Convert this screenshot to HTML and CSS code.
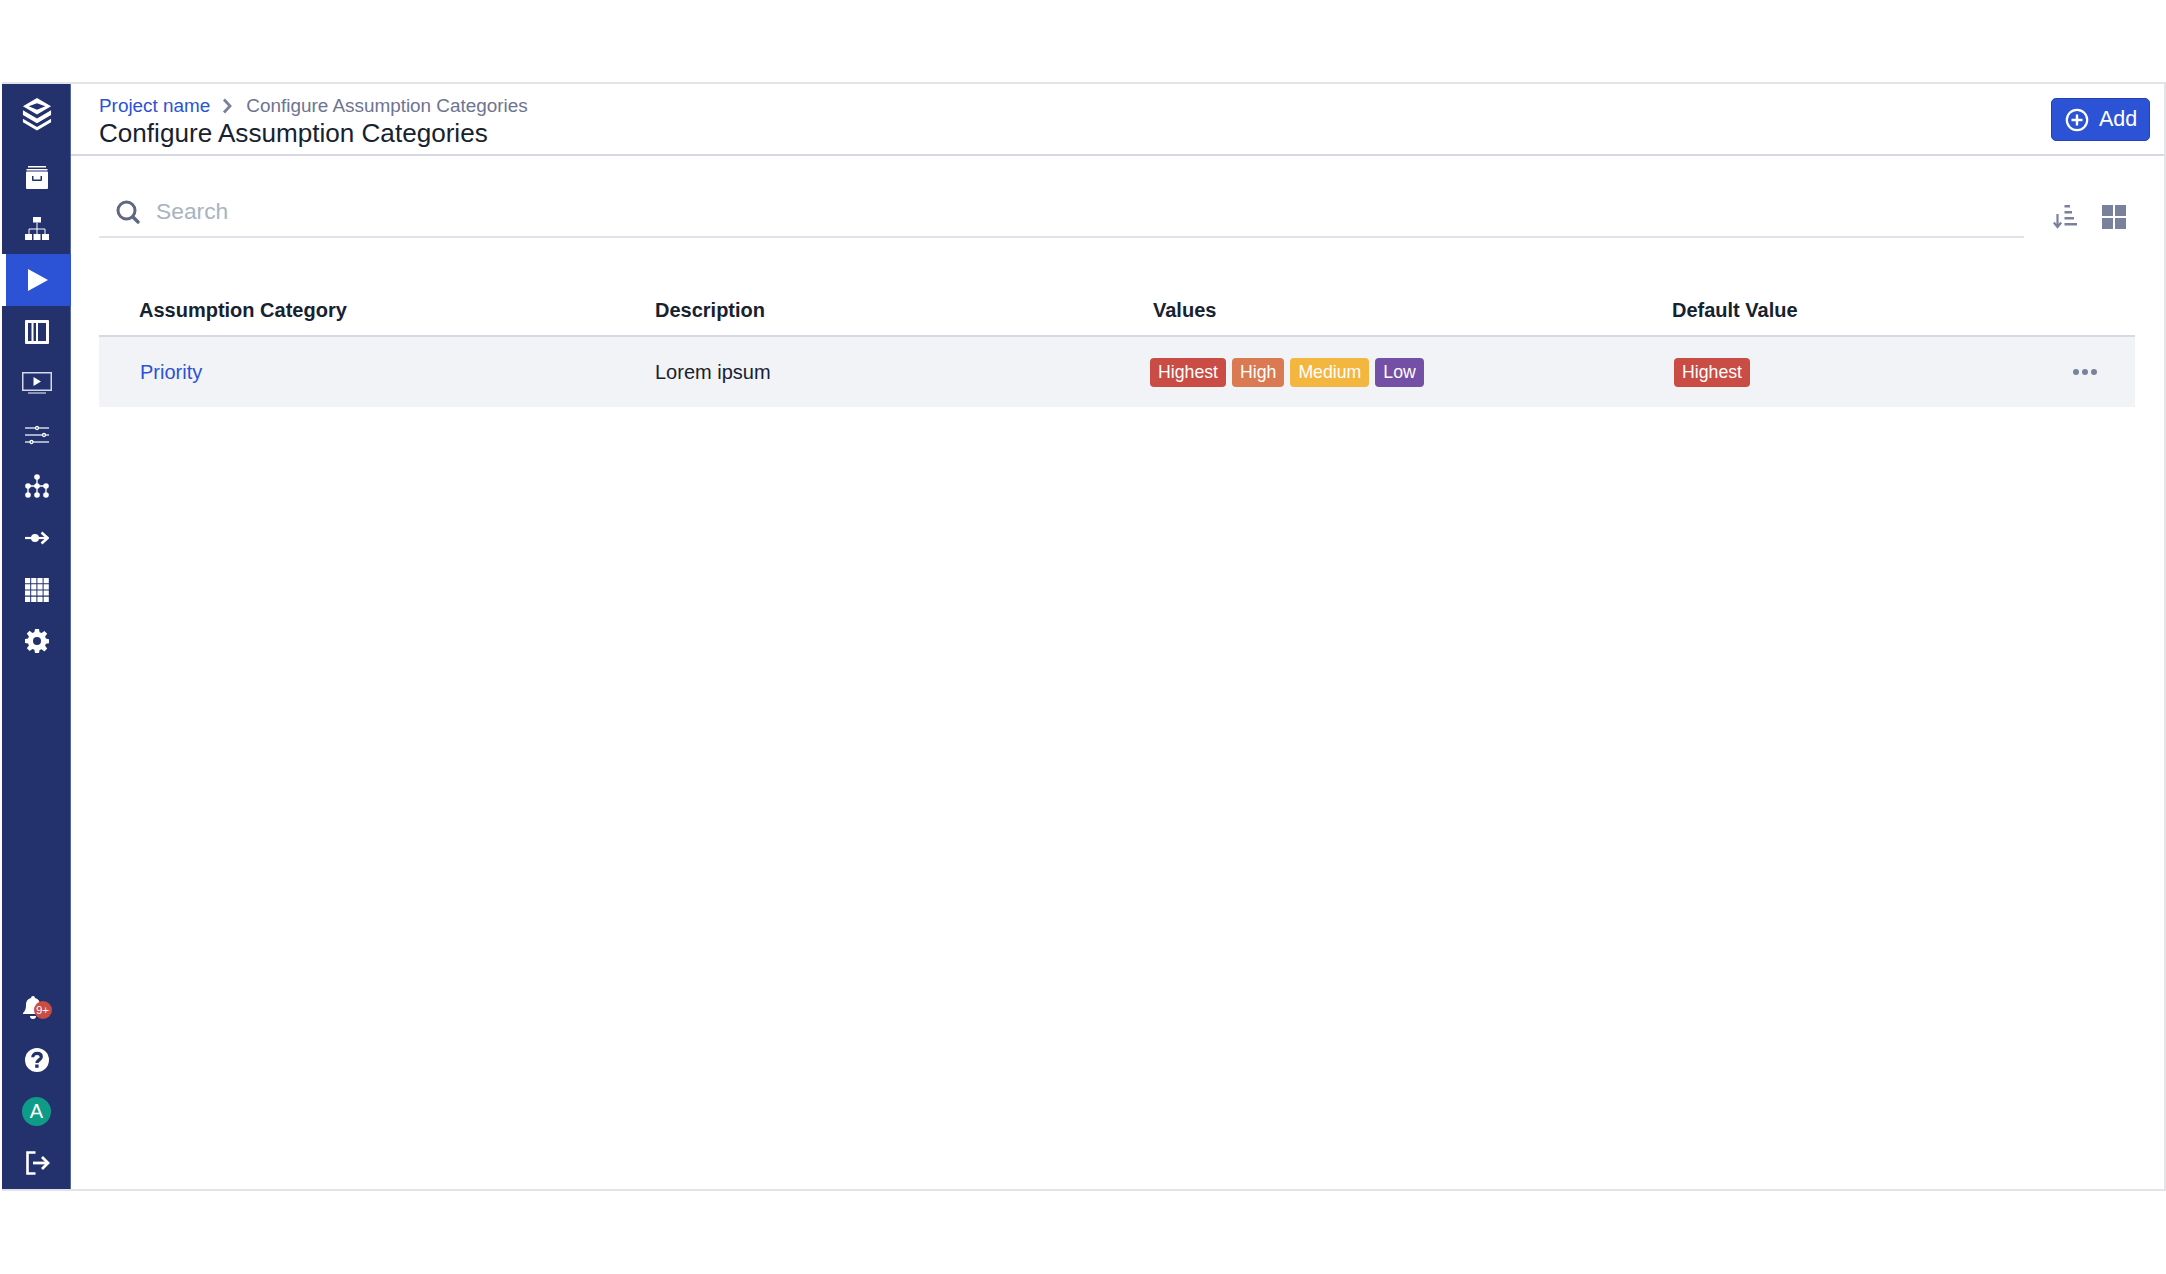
FILE: index.html
```html
<!DOCTYPE html>
<html lang="en">
<head>
<meta charset="utf-8">
<title>Configure Assumption Categories</title>
<link rel="stylesheet" href="styles.css">
</head>
<body>
<div class="frame">
  <nav class="sidebar">
    <div class="nav-logo">
      <svg class="ic-logo" viewBox="0 0 30 34"><path fill="#fff" d="M15 0 29.500 8.500 15 17 .5 8.500Zm0 5.500L6.500 8.500 15 12l8.500-3.500Z"/><path fill="#fff" d="M.5 12.500 15 21l14.500-8.500v5L15 26 .5 17.500Z"/><path fill="#fff" d="M.5 21.500 15 30l14.500-8.500V25L15 33.500.5 25Z"/></svg>
    </div>
    <div class="nav-top">
      <a class="nav-item"><svg class="ic" viewBox="0 0 24 24"><path fill="#fff" d="M3 1h18v1.500H3zM1.500 4h21v1.500h-21z"/><path fill="#fff" fill-rule="evenodd" d="M1 7.500a1 1 0 0 1 1-1h20a1 1 0 0 1 1 1V23a1 1 0 0 1-1 1H2a1 1 0 0 1-1-1ZM7 11v4a1 1 0 0 0 1 1h8a1 1 0 0 0 1-1v-4h-1.500v3.500h-7V11Z"/></svg></a>
      <a class="nav-item"><svg class="ic" viewBox="0 0 24 24"><path fill="#fff" d="M8 1h8v5.500H8zM0 18h7v6H0zM8.500 18h7v6h-7zM17 18h7v6h-7z"/><path fill="none" stroke="#fff" d="M12 6.500V18M4 18v-5h16v5"/></svg></a>
      <a class="nav-item active"><svg class="ic-play" viewBox="0 0 20 22"><path fill="#fff" d="M0 0 20 11 0 22Z"/></svg></a>
      <a class="nav-item"><svg class="ic" viewBox="0 0 24 24"><path fill="#fff" fill-rule="evenodd" d="M0 1a1 1 0 0 1 1-1h22a1 1 0 0 1 1 1v22a1 1 0 0 1-1 1H1a1 1 0 0 1-1-1ZM3 3v18h3.500V3Zm5.500 0v18H11V3ZM13 3v18h8V3Z"/></svg></a>
      <a class="nav-item"><svg class="ic-tv" viewBox="0 0 30 22"><rect x=".75" y=".75" width="28.500" height="17.500" fill="none" stroke="#d5d8e6" stroke-width="1.500"/><path fill="#fff" d="M11.500 5 19 9.500 11.500 14Z"/><path stroke="#d5d8e6" stroke-width="1.200" d="M6 21h18"/></svg></a>
      <a class="nav-item"><svg class="ic" viewBox="0 0 24 24"><path stroke="#d5d8e6" stroke-width="1.400" d="M0 5h24M0 12h24M0 19h24"/><g fill="#23316d" stroke="#fff" stroke-width="1.300"><circle cx="12" cy="5" r="1.500"/><circle cx="19" cy="12" r="1.500"/><circle cx="6.500" cy="19" r="1.500"/></g></svg></a>
      <a class="nav-item"><svg class="ic" viewBox="0 0 24 24"><g fill="#fff"><circle cx="12" cy="3" r="2.800"/><circle cx="3" cy="12" r="2.800"/><circle cx="12" cy="12" r="2.800"/><circle cx="21" cy="12" r="2.800"/><circle cx="3" cy="21" r="2.800"/><circle cx="12" cy="21" r="2.800"/><circle cx="21" cy="21" r="2.800"/></g><path stroke="#fff" stroke-width="1.300" d="M12 3v18M3 12h18M3 12v9M21 12v9"/></svg></a>
      <a class="nav-item"><svg class="ic" viewBox="0 0 24 24"><path stroke="#fff" stroke-width="2.200" d="M0 12h21"/><circle cx="10" cy="12" r="4" fill="#fff"/><path fill="none" stroke="#fff" stroke-width="2.600" d="m16.500 6.500 6 5.500-6 5.500"/></svg></a>
      <a class="nav-item"><svg class="ic" viewBox="0 0 24 24"><path stroke="#fff" stroke-width="5.200" stroke-dasharray="5.200 1" d="M0 2.600h24M0 8.800h24M0 15h24M0 21.400h24"/></svg></a>
      <a class="nav-item"><svg class="ic" viewBox="0 0 24 24"><path fill="#fff" fill-rule="evenodd" d="M10 0h4l.6 3.300 2 .8L19.400 2l2.800 2.800-2.100 2.800.8 2 3.100.6v4l-3.100.6-.8 2 2.100 2.800-2.800 2.800-2.800-2.100-2 .8L14 24h-4l-.6-3.200-2-.8-2.800 2.100-2.800-2.800 2.100-2.800-.8-2L0 14v-4l3.100-.6.800-2-2.100-2.800L4.600 1.800l2.800 2.100 2-.8ZM12 8a4 4 0 1 0 0 8 4 4 0 0 0 0-8Z"/></svg></a>
    </div>
    <div class="nav-bottom">
      <a class="nav-item"><span class="bell"><svg class="ic-bell" viewBox="0 0 20 24"><path fill="#fff" d="M10 0a2 2 0 0 1 2 2c3.500.8 5 3.500 5 7 0 4 1 6 3 8v1H0v-1c2-2 3-4 3-8 0-3.500 1.500-6.200 5-7a2 2 0 0 1 2-2ZM7 20h6a3 3 0 0 1-6 0Z"/></svg><span class="badge-count">9+</span></span></a>
      <a class="nav-item"><svg class="ic" viewBox="0 0 24 24"><circle cx="12" cy="12" r="12" fill="#fff"/><path fill="none" stroke="#23316d" stroke-width="3.200" d="M7.800 9.300c0-2.500 1.900-3.900 4.300-3.900s4.200 1.300 4.200 3.500c0 3-4.300 3-4.300 6.100"/><rect x="10.200" y="16.500" width="3.400" height="3.300" fill="#23316d"/></svg></a>
      <a class="nav-item"><span class="avatar">A</span></a>
      <a class="nav-item"><svg class="ic ic-exit" viewBox="0 0 24 24"><path fill="none" stroke="#fff" stroke-width="2.600" d="M9.500 1.500H1.500v21h8"/><path stroke="#fff" stroke-width="2.800" d="M7 12h15"/><path fill="none" stroke="#fff" stroke-width="2.800" d="m16 6 6 6-6 6"/></svg></a>
    </div>
  </nav>
  <main class="main">
    <header class="topbar">
      <div class="titles">
        <div class="crumbs">
          <a class="crumb-link">Project name</a>
          <svg class="crumb-sep" viewBox="0 0 10 16"><path fill="none" stroke="#7a819c" stroke-width="2.800" d="m2 1.500 6 6.500-6 6.500"/></svg>
          <span class="crumb-current">Configure Assumption Categories</span>
        </div>
        <h1 class="title">Configure Assumption Categories</h1>
      </div>
      <button class="btn-add" type="button">
        <svg class="ic-add" viewBox="0 0 24 24"><circle cx="12" cy="12" r="10.200" fill="none" stroke="#fff" stroke-width="2.200"/><path stroke="#fff" stroke-width="2.400" d="M12 6.500v11M6.500 12h11"/></svg>
        <span>Add</span>
      </button>
    </header>
    <section class="toolbar">
      <div class="search">
        <svg class="ic-search" viewBox="0 0 24 24"><circle cx="10.500" cy="10.500" r="8.500" fill="none" stroke="#5f6783" stroke-width="3"/><path stroke="#5f6783" stroke-width="3.400" stroke-linecap="round" d="m17 17 5 5"/></svg>
        <span class="search-text">Search</span>
      </div>
      <div class="tools">
        <svg class="ic-sort" viewBox="0 0 24 24"><path fill="#7a819c" d="M11.500 0h5.500v2.500h-5.500zM11.500 6H19v2.500h-7.500zM11.500 12H21v2.500h-9.500zM11.500 18H24v2.500H11.500z"/><path fill="none" stroke="#7a819c" stroke-width="2.200" d="M4.500 9v13M.8 17.500 4.500 22l3.700-4.500"/></svg>
        <svg class="ic-grid" viewBox="0 0 24 24"><path fill="#7a819c" d="M0 0h11v11H0zM13 0h11v11H13zM0 13h11v11H0zM13 13h11v11H13z"/></svg>
      </div>
    </section>
    <section class="table">
      <div class="row head">
        <div class="c1">Assumption Category</div>
        <div class="c2">Description</div>
        <div class="c3">Values</div>
        <div class="c4">Default Value</div>
      </div>
      <div class="row body">
        <div class="c1"><a class="link">Priority</a></div>
        <div class="c2">Lorem ipsum</div>
        <div class="c3 tags">
          <span class="tag red">Highest</span><span class="tag orange">High</span><span class="tag yellow">Medium</span><span class="tag purple">Low</span>
        </div>
        <div class="c4 tags tags-default"><span class="tag red">Highest</span></div>
        <svg class="ic-more" viewBox="0 0 24 6"><g fill="#7a819c"><circle cx="3" cy="3" r="3"/><circle cx="12" cy="3" r="3"/><circle cx="21" cy="3" r="3"/></g></svg>
      </div>
    </section>
  </main>
</div>
</body>
</html>
```
FILE: styles.css
```css
* { box-sizing: border-box; }
html, body { margin: 0; height: 100%; background: #fff; }
body { padding: 82px 0 0 2px; font-family: "Liberation Sans", Arial, sans-serif; color: #172230; }
.frame { display: flex; height: 1109px; border-top: 2px solid #e3e4e8; border-bottom: 2px solid #e3e4e8; border-right: 2px solid #e3e4e8; }
.sidebar { width: 69px; flex: none; background: #23316d; display: flex; flex-direction: column; box-shadow: inset -1px 0 0 #5568a0; }
.nav-logo { height: 61px; display: flex; align-items: center; justify-content: center; margin-bottom: 6px; }
.ic-logo { width: 30px; height: 33px; }
.nav-top { display: flex; flex-direction: column; }
.nav-bottom { margin-top: auto; display: flex; flex-direction: column; }
.nav-item { height: 51.600px; display: flex; align-items: center; justify-content: center; }
.nav-item.active { background: #2c52d5; border-left: 4px solid #fff; padding-right: 2px; }
.ic { width: 24px; height: 24px; }
.ic-exit { margin-left: 2px; }
.ic-play { width: 20px; height: 22px; }
.ic-tv { width: 30px; height: 22px; }
.ic-bell { width: 20px; height: 24px; }
.bell { position: relative; display: block; width: 24px; height: 24px; margin-left: -4px; }
.badge-count { position: absolute; left: 11px; top: 5px; width: 18px; height: 18px; border-radius: 50%; background: #c94c45; color: #fff; font-size: 11.500px; line-height: 18px; text-align: center; }
.avatar { width: 29px; height: 29px; border-radius: 50%; background: #0e9b87; color: #fff; font-size: 20px; line-height: 29px; text-align: center; }
.main { flex: 1; min-width: 0; display: flex; flex-direction: column; }
.topbar { height: 72px; flex: none; border-bottom: 2px solid #d6d8e4; padding: 0 14px 0 28px; display: flex; align-items: center; justify-content: space-between; }
.crumbs { display: flex; align-items: center; font-size: 18.900px; line-height: 24px; margin-top: 10px; }
.crumb-link { color: #2c52d5; }
.crumb-sep { width: 10px; height: 16px; margin: 0 14px 0 12px; }
.crumb-current { color: #6d7491; }
.title { margin: 0; font-size: 26.100px; font-weight: 400; line-height: 30px; margin-bottom: 7px; }
.btn-add { display: flex; align-items: center; gap: 10px; width: 99px; height: 43px; padding: 1px 0 0 13px; background: #2c52d5; border: 1px solid #2443ad; border-radius: 5px; color: #fff; font: 21.500px "Liberation Sans", Arial, sans-serif; }
.ic-add { width: 24px; height: 24px; flex: none; }
.toolbar { display: flex; padding: 0 32px 0 28px; margin-top: 25px; }
.search { width: 1925px; height: 57px; border-bottom: 2px solid #e0e3e8; display: flex; align-items: center; gap: 16px; padding-left: 17px; padding-top: 6px; }
.ic-search { width: 24px; height: 24px; flex: none; }
.search-text { color: #a8b3c1; font-size: 22.800px; }
.tools { display: flex; gap: 25px; margin-left: 29px; padding-top: 24px; }
.ic-sort, .ic-grid { width: 24px; height: 24px; }
.table { margin: 0 29px 0 28px; }
.row { position: relative; display: flex; align-items: center; }
.head { height: 99px; padding-top: 48px; font-size: 20px; font-weight: 700; border-bottom: 2px solid #d6d8e4; }
.body { height: 70px; background: #f2f3f7; font-size: 20px; }
.c1 { width: 556px; padding-left: 40px; flex: none; }
.c2 { width: 498px; flex: none; }
.c3 { width: 519px; flex: none; }
.c4 { flex: 1; }
.body .c3 { margin-left: -3px; margin-right: 3px; }
.tags { display: flex; gap: 6px; }
.body .tags-default { margin-left: 2px; }
.tag { height: 29px; padding: 0 8px; border-radius: 4px; color: #fff; font-size: 17.700px; line-height: 29px; }
.red { background: #c94c45; }
.orange { background: #da7a52; }
.yellow { background: #f3b63f; }
.purple { background: #7350a5; }
.link { color: #2c52d5; margin-left: 1px; }
.ic-more { position: absolute; right: 38px; top: 32px; width: 24px; height: 6px; }
```
